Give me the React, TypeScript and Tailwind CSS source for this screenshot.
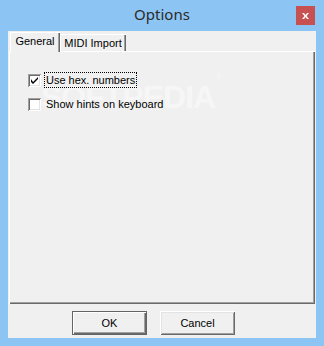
import React, { useState } from 'react';

const ui = { fontFamily: '"Liberation Sans", Arial, sans-serif' };

const Checkbox = ({ checked, label, focused, onToggle }: { checked: boolean; label: string; focused?: boolean; onToggle: () => void }) => (
  <div className="flex items-center h-[16px] cursor-default relative z-10" onClick={onToggle}>
    <div className="w-[13px] h-[13px] bg-white shadow-[inset_1px_1px_#a0a0a0,inset_-1px_-1px_#ffffff,inset_2px_2px_#696969,inset_-2px_-2px_#e3e3e3] flex items-center justify-center">
      {checked && (
        <svg width="7" height="7" viewBox="0 0 7 7">
          <path d="M0 2v3l2 2 5-5V0L2 5z" fill="#000" />
        </svg>
      )}
    </div>
    <span
      className={`ml-[3px] px-[2px] h-[16px] leading-[16px] text-[11px] text-black ${focused ? 'outline-1 outline-dotted outline-black -outline-offset-1' : ''}`}
    >
      {label}
    </span>
  </div>
);

const Button = ({ label, primary }: { label: string; primary?: boolean }) => (
  <button
    className={`w-[75px] h-[24px] bg-[#f0f0f0] text-[11px] text-black ${
      primary
        ? 'shadow-[inset_0_0_0_1px_#646464,inset_1px_1px_0_1px_#ffffff,inset_-1px_-1px_0_1px_#696969,inset_-2px_-2px_0_1px_#a0a0a0]'
        : 'shadow-[inset_1px_1px_#ffffff,inset_-1px_-1px_#696969,inset_2px_2px_#e3e3e3,inset_-2px_-2px_#a0a0a0]'
    }`}
  >
    {label}
  </button>
);

export default function App() {
  const [hex, setHex] = useState(true);
  const [hints, setHints] = useState(false);

  return (
    <div className="w-[324px] h-[346px] bg-[#8cc5f4] flex flex-col" style={ui}>
      {/* Title bar */}
      <div className="h-[31px] grid grid-cols-[1fr_auto_1fr] items-start">
        <div />
        <div
          className="pt-[4px] text-[15px] leading-[20px] text-[#2b2b2b]"
          style={{ fontFamily: '"Noto Sans", "Open Sans", sans-serif' }}
        >
          Options
        </div>
        <div className="flex justify-end pr-[9px] pt-[6px]">
          <div className="w-[19px] h-[19px] bg-[#c75050] flex items-center justify-center">
            <svg width="7" height="6" viewBox="0 0 7 6">
              <path d="M0 0h2l1.5 2L5 0h2L4.5 3 7 6H5L3.5 4 2 6H0l2.5-3z" fill="#fff" />
            </svg>
          </div>
        </div>
      </div>

      {/* Client area */}
      <div className="mx-[8px] h-[307px] bg-[#f0f0f0] flex flex-col pt-[1px] px-[1px]">
        {/* Tabs */}
        <div className="flex items-end h-[19px] pl-[1px]">
          <div className="w-[50px] h-[20px] -mb-[1px] bg-[#f0f0f0] shadow-[inset_1px_1px_#ffffff,inset_-1px_0_#696969,inset_-2px_0_#a0a0a0] flex items-start justify-center pt-[3px] text-[11px] leading-[13px] text-black relative z-10">
            General
          </div>
          <div className="w-[66px] h-[17px] shadow-[inset_1px_1px_#ffffff,inset_-1px_0_#696969,inset_-2px_0_#a0a0a0] flex items-start justify-center pt-[3px] text-[11px] leading-[13px] text-black">
            MIDI Import
          </div>
        </div>

        {/* Tab panel */}
        <div className="w-[306px] h-[253px] shadow-[inset_1px_1px_#ffffff,inset_-1px_-1px_#696969,inset_-2px_-2px_#a0a0a0] flex flex-col gap-[8px] pl-[19px] pt-[21px] relative">
          <span
            className="absolute left-[32px] top-[30px] text-[32px] leading-[32px] font-bold tracking-[-1px] text-white/45 pointer-events-none select-none"
          >
            SOFTPEDIA<sup className="text-[9px] font-normal align-top">®</sup>
          </span>
          <Checkbox checked={hex} label="Use hex. numbers" focused onToggle={() => setHex(!hex)} />
          <Checkbox checked={hints} label="Show hints on keyboard" onToggle={() => setHints(!hints)} />
        </div>

        {/* Buttons */}
        <div className="flex gap-[13px] pl-[63px] pt-[7px]">
          <Button label="OK" primary />
          <Button label="Cancel" />
        </div>
      </div>
    </div>
  );
}
